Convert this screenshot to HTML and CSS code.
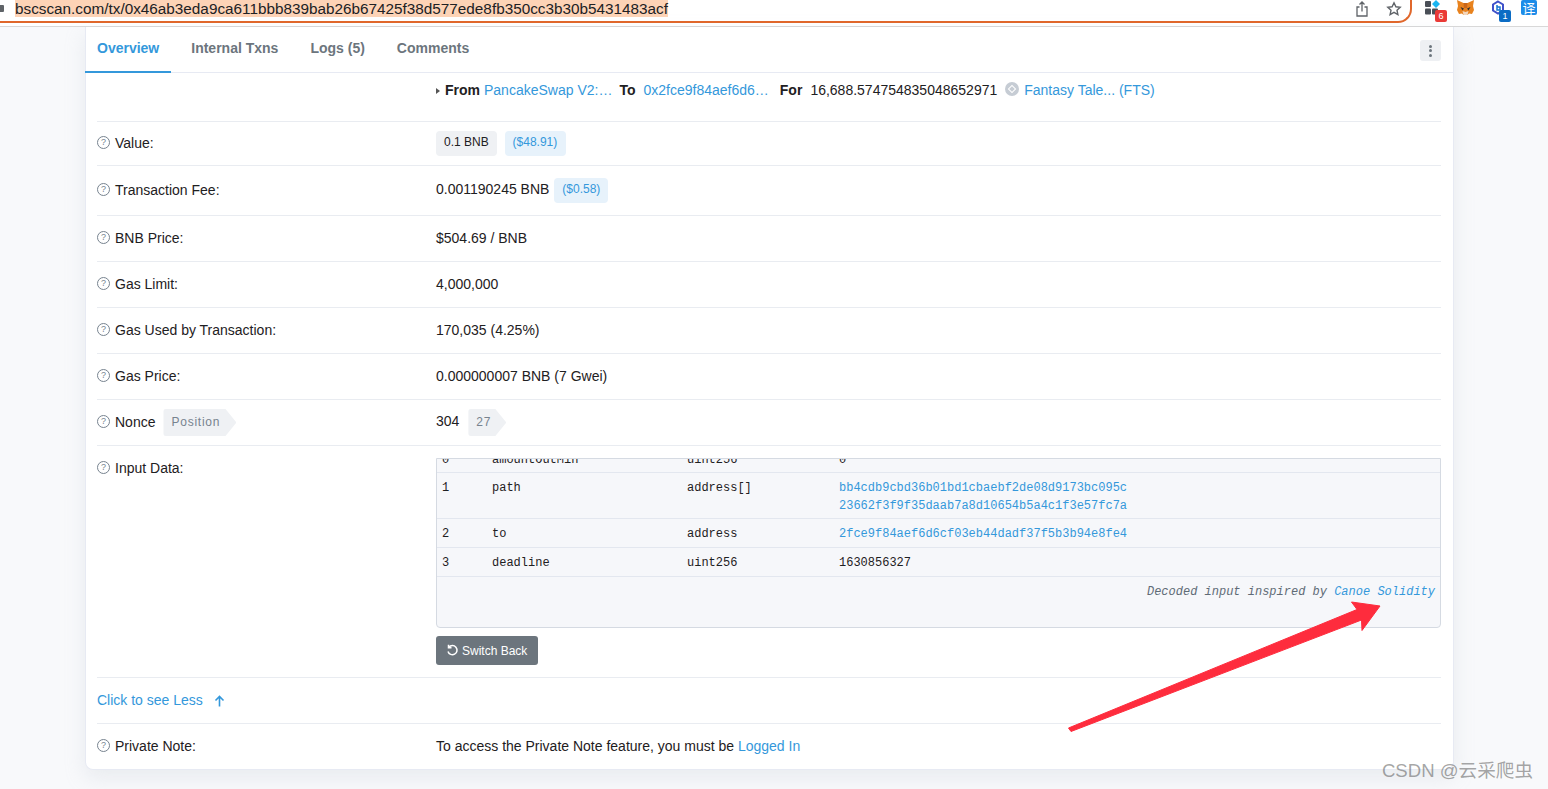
FILE: index.html
```html
<!DOCTYPE html>
<html lang="en">
<head>
  <meta charset="UTF-8" />
  <title>BscScan Transaction</title>
  <link rel="stylesheet" href="styles.css">
</head>
<body>
  <div class="toolbar">
    <div class="urlbar">
      <span class="lock"></span>
      <span class="url">bscscan.com/tx/0x46ab3eda9ca611bbb839bab26b67425f38d577ede8fb350cc3b30b5431483acf</span>
      <svg class="bar-icon share" width="14" height="16" viewBox="0 0 14 16" fill="none" stroke="#5f6368" stroke-width="1.3">
        <path d="M4.5 6H2v9h10V6H9.500M7 10.500V1M4.500 3.500L7 1l2.500 2.500"/>
      </svg>
      <svg class="bar-icon star" width="16" height="16" viewBox="0 0 16 16" fill="none" stroke="#5f6368" stroke-width="1.4">
        <path d="M8 1.800l1.900 4 4.300.5-3.200 3 .9 4.300L8 11.400l-3.900 2.200.9-4.300-3.200-3 4.300-.5z"/>
      </svg>
    </div>
    <div class="extensions">
      <div class="ext ext-grid">
        <svg width="16" height="15" viewBox="0 0 16 15">
          <rect x="0" y="1" width="6" height="6" rx="1" fill="#4a4f57"/>
          <rect x="0" y="8.500" width="6" height="6" rx="1" fill="#4a4f57"/>
          <rect x="7" y="8.500" width="6" height="6" rx="1" fill="#4a4f57"/>
          <path d="M11 0l4 4-4 4-4-4z" fill="#19b5f1"/>
        </svg>
        <span class="ext-badge badge-red">6</span>
      </div>
      <div class="ext ext-fox">
        <svg width="17" height="16" viewBox="0 0 17 16">
          <path d="M0 0l6.500 3h4L17 0l-1 6 1 4-2 4-3-.5L10.500 15h-4L5 13.500 2 14l-2-4 1-4z" fill="#e8821e"/>
          <path d="M6.500 3h4L10 8H7z" fill="#c9661a"/>
          <path d="M3.500 7L7 8.500 5.500 10.500zM13.500 7L10 8.500l1.500 2z" fill="#33302c"/>
          <path d="M5.500 11l3 1 3-1-1 4h-4z" fill="#f3d7bd"/>
        </svg>
      </div>
      <div class="ext ext-hex">
        <svg width="14" height="15" viewBox="0 0 14 15" fill="none" stroke="#3f51c9" stroke-width="2">
          <path d="M7 1.500l5 3v6l-5 3-5-3v-6z"/>
          <path d="M6 5v5h3V7H6" stroke="#1976d2" stroke-width="1.500"/>
        </svg>
        <span class="ext-badge badge-blue">1</span>
      </div>
      <div class="ext ext-translate">译</div>
    </div>
  </div>

  <div class="page">
    <div class="card">
      <div class="tabs">
        <a class="tab tab-active">Overview</a>
        <a class="tab">Internal Txns</a>
        <a class="tab">Logs (5)</a>
        <a class="tab">Comments</a>
        <button class="menu-btn"><span></span><span></span><span></span></button>
      </div>

      <div class="rows">
        <div class="row row-from">
          <div></div>
          <div class="transfer">
            <span class="caret"></span>
            <b>From</b>
            <a class="link from-name">PancakeSwap V2:…</a>
            <b class="to-label">To</b>
            <a class="link to-addr">0x2fce9f84aef6d6…</a>
            <b class="for-label">For</b>
            <span class="amount">16,688.574754835048652971</span>
            <span class="token-icon"><span></span></span>
            <a class="link">Fantasy Tale... (FTS)</a>
          </div>
        </div>

        <div class="row row-value">
          <div class="label"><span class="help">?</span>Value:</div>
          <div class="value">
            <span class="pill pill-grey">0.1 BNB</span>
            <span class="pill pill-blue pill-next">($48.91)</span>
          </div>
        </div>

        <div class="row row-fee">
          <div class="label"><span class="help">?</span>Transaction Fee:</div>
          <div class="value">0.001190245 BNB <span class="pill pill-blue pill-fee">($0.58)</span></div>
        </div>

        <div class="row">
          <div class="label"><span class="help">?</span>BNB Price:</div>
          <div class="value">$504.69 / BNB</div>
        </div>

        <div class="row">
          <div class="label"><span class="help">?</span>Gas Limit:</div>
          <div class="value">4,000,000</div>
        </div>

        <div class="row">
          <div class="label"><span class="help">?</span>Gas Used by Transaction:</div>
          <div class="value">170,035 (4.25%)</div>
        </div>

        <div class="row">
          <div class="label"><span class="help">?</span>Gas Price:</div>
          <div class="value">0.000000007 BNB (7 Gwei)</div>
        </div>

        <div class="row">
          <div class="label"><span class="help">?</span>Nonce<span class="tag tag-position">Position</span></div>
          <div class="value">304<span class="tag tag-nonce">27</span></div>
        </div>

        <div class="row row-input">
          <div class="label"><span class="help">?</span>Input Data:</div>
          <div class="value">
            <div class="decoded">
              <div class="d-row d-first">
                <span>0</span><span>amountOutMin</span><span>uint256</span><span>0</span>
              </div>
              <div class="d-row d-tall">
                <span>1</span><span>path</span><span>address[]</span>
                <span>
                  <a class="link">bb4cdb9cbd36b01bd1cbaebf2de08d9173bc095c</a><br>
                  <a class="link">23662f3f9f35daab7a8d10654b5a4c1f3e57fc7a</a>
                </span>
              </div>
              <div class="d-row">
                <span>2</span><span>to</span><span>address</span>
                <span><a class="link">2fce9f84aef6d6cf03eb44dadf37f5b3b94e8fe4</a></span>
              </div>
              <div class="d-row">
                <span>3</span><span>deadline</span><span>uint256</span><span>1630856327</span>
              </div>
              <div class="d-foot">Decoded input inspired by <a class="link">Canoe Solidity</a></div>
            </div>
            <button class="switch-btn">
              <svg width="13" height="13" viewBox="0 0 13 13" fill="none" stroke="#fff" stroke-width="1.500">
                <path d="M2.800 3.300A4.600 4.600 0 1 1 2 7.500"/>
                <path d="M2.500 .8v3h3" />
              </svg>
              Switch Back
            </button>
          </div>
        </div>

        <div class="row row-less">
          <a class="link">Click to see Less</a>
          <svg class="up-arrow" width="11" height="12" viewBox="0 0 11 12" fill="none" stroke="#3498db" stroke-width="1.600">
            <path d="M5.500 11.500V1.500M1.500 5.500l4-4 4 4"/>
          </svg>
        </div>

        <div class="row row-last">
          <div class="label"><span class="help">?</span>Private Note:</div>
          <div class="value">To access the Private Note feature, you must be <a class="link">Logged In</a></div>
        </div>
      </div>
    </div>
  </div>

  <svg class="red-arrow" width="1548" height="789" viewBox="0 0 1548 789">
    <path d="M1068.500 728 L1357 609.500 L1351.500 602 L1380 606 L1362 630.500 L1361.500 620 L1071 731.500 Z" fill="#fe2c3d" stroke="#fe2c3d" stroke-width="1" stroke-linejoin="round"/>
  </svg>
  <div class="watermark">CSDN @云采爬虫</div>
</body>
</html>
```

FILE: styles.css
```css
* {
  box-sizing: border-box;
}
html, body {
  height: 789px;
  overflow: hidden;
}
body {
  margin: 0;
  font-family: "Liberation Sans", Arial, sans-serif;
  font-size: 14px;
  line-height: 21px;
  color: #1e2022;
  background-color: #f8f9fb;
  position: relative;
}
a {
  text-decoration: none;
}
.link {
  color: #3498db;
}

/* browser bar */
.toolbar {
  height: 27px;
  background-color: #fff;
  border-bottom: 1px solid #d8d8d8;
  display: flex;
}
.urlbar {
  width: 1412px;
  height: 23px;
  border-bottom: 2px solid #e0672b;
  border-right: 2px solid #e0672b;
  border-bottom-right-radius: 14px;
  display: flex;
  align-items: flex-start;
}
.lock {
  width: 4px;
  height: 7px;
  margin-top: 5px;
  background-color: #5f6368;
  border-radius: 0 1px 1px 0;
}
.url {
  margin-left: 11px;
  height: 17px;
  line-height: 17px;
  font-size: 15.3px;
  color: #202124;
  background-color: #fdd3b6;
}
.bar-icon {
  margin-top: 1px;
}
.share {
  margin-left: 687px;
}
.star {
  margin-left: 17px;
}
.extensions {
  display: flex;
  margin-left: 13px;
}
.ext {
  position: relative;
  height: 22px;
}
.ext-grid {
  width: 32px;
}
.ext-fox {
  width: 34px;
}
.ext-hex {
  width: 30px;
}
.ext-badge {
  position: absolute;
  top: 10px;
  left: 10px;
  width: 12px;
  height: 12px;
  border-radius: 2px;
  font-size: 9px;
  line-height: 12px;
  text-align: center;
  color: #fff;
}
.badge-red {
  background-color: #ea3a36;
}
.badge-blue {
  left: 8px;
  background-color: #0b6cc4;
}
.ext-translate {
  width: 16px;
  height: 15px;
  background-color: #1d8ce8;
  border-radius: 2px;
  color: #fff;
  font-family: "Noto Sans CJK SC", sans-serif;
  font-size: 13px;
  line-height: 15px;
  text-align: center;
}

/* card */
.page {
  padding: 0 94px 0 85px;
}
.card {
  width: 1369px;
  height: 743px;
  background-color: #fff;
  border: 1px solid #e7eaf3;
  border-top: none;
  border-radius: 0 0 8px 8px;
  box-shadow: 0 8px 20px rgba(189, 197, 209, 0.25);
}
.tabs {
  height: 46px;
  margin-left: -1px;
  display: flex;
  align-items: flex-start;
  border-bottom: 1px solid #e7eaf3;
  position: relative;
}
.tab {
  padding: 0 16px;
  font-weight: bold;
  color: #6c757d;
  line-height: 43px;
}
.tab-active {
  padding: 0 12px;
  margin-right: 4px;
  color: #3498db;
  box-shadow: inset 0 -2px 0 #3498db;
  height: 46px;
}
.menu-btn {
  position: absolute;
  right: 12px;
  top: 13px;
  width: 21px;
  height: 21px;
  padding: 0;
  border: none;
  border-radius: 3px;
  background-color: #eef0f3;
  display: flex;
  flex-direction: column;
  align-items: center;
  justify-content: center;
  gap: 1.500px;
}
.menu-btn span {
  width: 3px;
  height: 3px;
  border-radius: 50%;
  background-color: #6c757d;
}

/* rows */
.rows {
  padding: 0 12px 0 11px;
}
.row {
  height: 46px;
  display: grid;
  grid-template-columns: 339px 1fr;
  align-items: center;
  border-bottom: 1px solid #e9ecf1;
}
.row-from {
  height: 49px;
  align-items: start;
  padding-top: 7px;
}
.row-value {
  height: 44px;
}
.row-fee {
  height: 50px;
}
.row-input {
  height: 232px;
  align-items: start;
  padding-top: 12px;
}
.row-less {
  display: flex;
  align-items: center;
}
.row-last {
  height: 44px;
  border-bottom: none;
}
.label {
  display: flex;
  align-items: center;
}
.help {
  width: 13px;
  height: 13px;
  margin: -2px 5px 0 0;
  border: 1px solid #77838f;
  border-radius: 50%;
  font-size: 9px;
  line-height: 11px;
  text-align: center;
  color: #77838f;
}
.transfer {
  display: flex;
  align-items: center;
  white-space: nowrap;
}
.caret {
  width: 0;
  height: 0;
  margin-right: 5px;
  border-left: 4px solid #555;
  border-top: 3.500px solid transparent;
  border-bottom: 3.500px solid transparent;
}
.from-name {
  margin-left: 4px;
}
.to-label {
  margin-left: 7px;
}
.to-addr {
  margin-left: 8px;
}
.for-label {
  margin-left: 11px;
}
.amount {
  margin-left: 8px;
}
.token-icon {
  width: 14px;
  height: 14px;
  margin: -4px 5px 0 8px;
  border-radius: 50%;
  background-color: #c6ccd4;
  display: flex;
  align-items: center;
  justify-content: center;
}
.token-icon span {
  width: 6px;
  height: 6px;
  border: 1.500px solid #fff;
  transform: rotate(45deg);
}
.value {
  display: block;
}
.pill {
  display: inline-block;
  height: 25px;
  padding: 0 8px;
  border-radius: 4px;
  font-size: 12px;
  line-height: 22px;
  vertical-align: middle;
}
.pill-grey {
  background-color: #eff1f4;
  color: #1e2022;
}
.pill-blue {
  background-color: #e7f2fb;
  color: #3498db;
}
.pill-next {
  margin-left: 4px;
  width: 61px;
}
.pill-fee {
  margin-left: 1px;
}
.tag {
  display: inline-block;
  height: 27px;
  padding-left: 8px;
  background-color: #eff1f4;
  border-radius: 3px 0 0 3px;
  clip-path: polygon(0 0, calc(100% - 11px) 0, 100% 50%, calc(100% - 11px) 100%, 0 100%);
  font-size: 12px;
  line-height: 27px;
  letter-spacing: 0.75px;
  color: #77838f;
}
.tag-position {
  width: 73px;
  margin-left: 8px;
}
.tag-nonce {
  width: 38px;
  margin-left: 9px;
  vertical-align: middle;
}

/* decoded input */
.decoded {
  height: 170px;
  background-color: #f6f7fa;
  border: 1px solid #d5dae2;
  border-radius: 0 0 4px 4px;
  overflow: hidden;
  font-family: "Liberation Mono", "Courier New", monospace;
  font-size: 12px;
  line-height: 18px;
  color: #1e2022;
}
.d-row {
  display: grid;
  grid-template-columns: 50px 195px 152px 1fr;
  height: 29px;
  padding: 6px 0 0 5px;
  border-bottom: 1px solid #e3e7ef;
}
.d-first {
  height: 28px;
  margin-top: -14px;
}
.d-tall {
  height: 46px;
}
.d-foot {
  padding: 6px 5px 0 0;
  text-align: right;
  font-style: italic;
  color: #5f6b76;
}
.switch-btn {
  display: flex;
  align-items: center;
  gap: 3px;
  width: 102px;
  height: 29px;
  margin-top: 8px;
  padding: 0 0 0 10px;
  border: none;
  border-radius: 3px;
  background-color: #6c757d;
  color: #fff;
  font-family: "Liberation Sans", Arial, sans-serif;
  font-size: 12px;
}
.up-arrow {
  margin-left: 11px;
}

/* things on top of the page */
.red-arrow {
  position: absolute;
  left: 0;
  top: 0;
  pointer-events: none;
}
.watermark {
  position: absolute;
  right: 15px;
  top: 758px;
  font-family: "Liberation Sans", "Noto Sans CJK SC", sans-serif;
  font-size: 18.6px;
  line-height: 26px;
  color: rgba(90, 90, 90, 0.55);
  white-space: nowrap;
}
```
